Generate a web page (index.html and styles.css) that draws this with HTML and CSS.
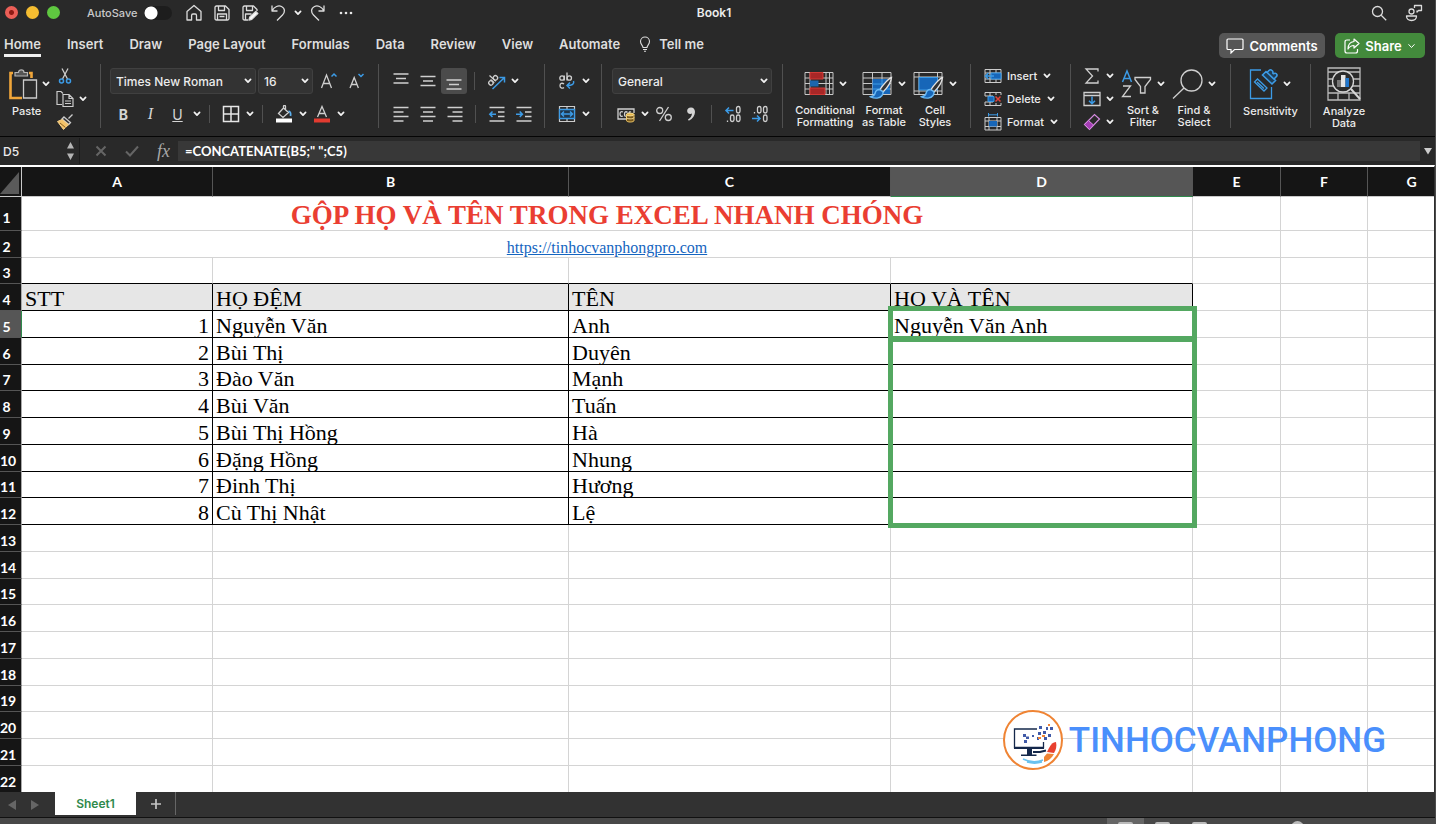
FILE: index.html
```html
<!DOCTYPE html>
<html lang="vi">
<head>
<meta charset="utf-8">
<title>Book1</title>
<link rel="stylesheet" href="styles.css">
</head>
<body>
<svg class="defs" aria-hidden="true">
  <symbol id="chev" viewBox="0 0 8 8"><path d="M1.4 2.4 4 5.2 6.6 2.4" fill="none" stroke="currentColor" stroke-width="1.7" stroke-linecap="round" stroke-linejoin="round"/></symbol>
  <symbol id="brush" viewBox="0 0 24 24"><path d="M22.5 1.5c-3 1-9 8-11.500 12l3 2.500c3-3 8-9.500 8.500-14.500z" fill="#333" stroke="#e2e2e2" stroke-width="1.400"/><path d="M10.500 13.500c-2.500 0-4 1.500-4.500 4-.4 1.800-2 2.800-4.500 3.300 4.500 2.200 9.500 1.700 11.500-1.300.9-1.400 1.200-2.500.8-3.800z" fill="#1766b8" stroke="#69b9f5" stroke-width="1.400"/></symbol>
</svg>
<div class="app">
  <header class="titlebar">
    <div class="title-left">
      <div class="lights"><span class="light red"></span><span class="light yellow"></span><span class="light green"></span></div>
      <label class="autosave">AutoSave <input type="checkbox" class="toggle"></label>
      <div class="quick">
        <button aria-label="Home"><svg width="18" height="18" viewBox="0 0 18 18"><path d="M2 7.500 9 1.500l7 6V16h-4.500v-4.500c0-1-.6-1.500-1.300-1.500H8c-.8 0-1.400.5-1.400 1.500V16H2z"/></svg></button>
        <button aria-label="Save"><svg width="18" height="18" viewBox="0 0 18 18"><path d="M2 3.500C2 2.500 2.500 2 3.500 2h9L16 5.500v9c0 1-.5 1.500-1.500 1.500h-11C2.500 16 2 15.500 2 14.500zM5.500 2v4.500h6V2M4.500 16v-6h9v6M6.500 12.500h5"/></svg></button>
        <button aria-label="Save as"><svg width="18" height="18" viewBox="0 0 18 18"><path d="M7 16H3.500C2.500 16 2 15.500 2 14.500v-11C2 2.500 2.500 2 3.500 2h9L16 5.500V7M5.500 2v4.500h6V2M4.500 16v-6h6"/><path d="m8 16 .8-3 6-5.500 2 2-6 5.800z" fill="#fff"/></svg></button>
        <button aria-label="Undo"><svg width="18" height="18" viewBox="0 0 18 18"><path d="M3 1.500v5.500h5.500M3 7C5.500 2.500 9.500 1 12.500 2.500c4 2 3.500 6 1 8.500L8 16.500"/></svg></button>
        <button class="mini" aria-label="Undo list"><svg class="chev"><use href="#chev"/></svg></button>
        <button aria-label="Redo"><svg width="18" height="18" viewBox="0 0 18 18"><path d="M15 1.500v5.500H9.500M15 7C12.500 2.500 8.500 1 5.500 2.500c-4 2-3.500 6-1 8.500l5.500 5.500"/></svg></button>
        <button aria-label="More"><svg width="18" height="18" viewBox="0 0 18 18"><g fill="#e8e8e8" stroke="none"><circle cx="4" cy="9" r="1.300"/><circle cx="9" cy="9" r="1.300"/><circle cx="14" cy="9" r="1.300"/></g></svg></button>
      </div>
    </div>
    <h1 class="doc-title">Book1</h1>
    <div class="title-right quick">
      <button aria-label="Search"><svg width="18" height="18" viewBox="0 0 18 18"><circle cx="7.500" cy="7.500" r="5"/><path d="m11.200 11.200 5 5"/></svg></button>
      <button aria-label="Presence"><svg width="18" height="18" viewBox="0 0 18 18"><circle cx="6.500" cy="7.500" r="2.500"/><path d="M1.500 12h10c0 3-2 4.500-5 4.500s-5-1.500-5-4.500zM9.500 4V1.500h7v5h-3l-1.500 1.500V6.500"/></svg></button>
    </div>
  </header>

  <nav class="tabs">
    <a href="#" class="tab active">Home</a>
    <a href="#" class="tab">Insert</a>
    <a href="#" class="tab">Draw</a>
    <a href="#" class="tab">Page Layout</a>
    <a href="#" class="tab">Formulas</a>
    <a href="#" class="tab">Data</a>
    <a href="#" class="tab">Review</a>
    <a href="#" class="tab">View</a>
    <a href="#" class="tab">Automate</a>
    <a href="#" class="tab tell"><svg width="12" height="16" viewBox="0 0 12 16"><path d="M4 11.500C4 9.500 1.500 8.500 1.500 5.500a4.500 4.500 0 0 1 9 0c0 3-2.500 4-2.500 6zM4 13.500h4M5 15.300h2" fill="none" stroke="#ddd" stroke-width="1.100"/></svg>Tell me</a>
    <div class="tab-actions">
      <button class="pill comments"><svg width="18" height="16" viewBox="0 0 18 16"><path d="M2 1h14c.6 0 1 .4 1 1v8.500c0 .6-.4 1-1 1H8.500L5 15v-3.500H2c-.6 0-1-.4-1-1V2c0-.6.4-1 1-1z" fill="none" stroke="#fff" stroke-width="1.200"/></svg>Comments</button>
      <button class="pill share"><svg width="16" height="16" viewBox="0 0 16 16"><path d="M6 2H3C1.700 2 1 2.700 1 4v9c0 1.300.7 2 2 2h8.500c1.300 0 2-.7 2-2v-2M10 1l5 4.500-5 4.500V7.500C7 7.500 5.500 8.500 4 11c0-4 2-7 6-7.500z" fill="none" stroke="#fff" stroke-width="1.200" stroke-linejoin="round"/></svg>Share<svg width="9" height="8" viewBox="0 0 8 8"><path d="M1 2.300 4 5.500 7 2.300" fill="none" stroke="#fff"/></svg></button>
    </div>
  </nav>

  <section class="ribbon">
    <div class="group g-clip">
      <button class="big">
        <span class="big-icon"><svg width="30" height="32" viewBox="0 0 30 32"><path d="M4 5H1.500v25H13M20 5h2.500v5" fill="none" stroke="#f0a63a" stroke-width="2.600"/><path d="M6 8V4.500h3.500C9.500 1 15 1 15 4.500h3.500V8z" fill="#555" stroke="#b5b5b5" stroke-width="1.200"/><path d="M14.500 12h13v18h-13z" fill="#2b2b2b" stroke="#ccc" stroke-width="1.300"/></svg><svg class="chev"><use href="#chev"/></svg></span>
        <span class="left-label">Paste</span>
      </button>
      <div class="stack">
        <button aria-label="Cut"><svg width="18" height="18" viewBox="0 0 18 18"><path d="M6 1.500 11.500 12M12 1.500 6.500 12" fill="none" stroke="#ccc" stroke-width="1.300"/><circle cx="5.500" cy="14" r="2" fill="none" stroke="#3c9be6" stroke-width="1.500"/><circle cx="12.500" cy="14" r="2" fill="none" stroke="#3c9be6" stroke-width="1.500"/></svg></button>
        <button aria-label="Copy"><svg width="18" height="18" viewBox="0 0 18 18"><path d="M6 14.500H1v-13h4l2 2M7 4.500h6l4 4v8H7zM13 4.500v4h4M9 11h6M9 13.500h6" fill="none" stroke="#ccc" stroke-width="1.200"/></svg><svg class="chev"><use href="#chev"/></svg></button>
        <button aria-label="Format painter"><svg width="18" height="18" viewBox="0 0 18 18"><path d="m16.500 1.500-4 4M8 4l6.500 5.500-1.800 2L6 6z" fill="#333" stroke="#ccc" stroke-width="1.300"/><path d="M6 6.500 1.500 8.500l6 8 5-4.800z" fill="#f3c36a" stroke="#f5d08a"/><path d="m4 10 5.500 4.500" stroke="#8a6020"/></svg></button>
      </div>
    </div>

    <div class="group g-font rows">
      <div class="row">
        <label class="combo font-name"><select aria-label="Font"><option>Times New Roman</option></select><svg class="chev"><use href="#chev"/></svg></label>
        <label class="combo font-size"><select aria-label="Font size"><option>16</option></select><svg class="chev"><use href="#chev"/></svg></label>
        <button class="ic" aria-label="Grow font"><svg width="18" height="18" viewBox="0 0 18 18"><path d="M1.500 16 6.500 3l5 13M3.300 11.500h6.500" class="ln"/><path d="m11.500 4.500 2.500-2.500 2.500 2.500" class="bl"/></svg></button>
        <button class="ic" aria-label="Shrink font"><svg width="18" height="18" viewBox="0 0 18 18"><path d="M3 16 7.200 5.500 11.400 16M4.500 12.500h5.500" class="ln"/><path d="m11.500 2 2.500 2.500L16.500 2" class="bl"/></svg></button>
      </div>
      <div class="row">
        <button class="ic letter bold">B</button><button class="ic letter italic">I</button><button class="ic letter under">U</button>
        <button class="drop" aria-label="Underline styles"><svg class="chev"><use href="#chev"/></svg></button>
        <i class="sep"></i>
        <button class="ic" aria-label="Borders"><svg width="18" height="18" viewBox="0 0 18 18"><path d="M1.500 1.500h15v15h-15zM9 1.500v15M1.500 9h15" fill="none" stroke="#e6e6e6" stroke-width="1.500"/></svg></button><button class="drop" aria-label="Border styles"><svg class="chev"><use href="#chev"/></svg></button>
        <i class="sep"></i>
        <button class="ic" aria-label="Fill colour"><svg width="18" height="18" viewBox="0 0 18 18"><path d="m3.500 8.500 5-5.500 5 4.500-5.500 5zM8.500 3V1.200c0-1 2-1 2 0v3" class="ln"/><path d="M13.500 6c2 .5 2.500 2 2 5" fill="none" stroke="#5cb0ef" stroke-width="1.800"/><path d="M1 13.500h16v4H1z" fill="#fff"/></svg></button><button class="drop" aria-label="Fill colours"><svg class="chev"><use href="#chev"/></svg></button>
        <button class="ic" aria-label="Font colour"><svg width="18" height="18" viewBox="0 0 18 18"><path d="M4.500 12 9 1.500 13.500 12M6 8.500h6" class="ln"/><path d="M1 13.500h16v4H1z" fill="#e23b30"/></svg></button><button class="drop" aria-label="Font colours"><svg class="chev"><use href="#chev"/></svg></button>
      </div>
    </div>

    <div class="group g-align rows">
      <div class="row">
        <button class="ic" aria-label="Top align"><svg width="18" height="18" viewBox="0 0 18 18"><path d="M1.500 2h15M4 6.500h10M1.500 11h15" class="ln"/></svg></button>
        <button class="ic" aria-label="Middle align"><svg width="18" height="18" viewBox="0 0 18 18"><path d="M1.500 4.500h15M4 9h10M1.500 13.500h15" class="ln"/></svg></button>
        <button class="ic on" aria-label="Bottom align"><svg width="18" height="18" viewBox="0 0 18 18"><path d="M1.500 8h15M4 12.500h10M1.500 17h15" class="ln"/></svg></button>
        <i class="sep"></i>
        <button class="ic" aria-label="Orientation"><svg width="20" height="18" viewBox="0 0 20 18"><g transform="translate(5.500 8) rotate(-48)" class="ln"><circle cx="-2.500" cy="1.500" r="2.200"/><path d="M-.3-1v5M2-4.500v8.500"/><circle cx="4.200" cy="1.500" r="2.200"/></g><path d="M6.500 17 18 6M13.500 5.500h5v5" class="bl"/></svg></button><button class="drop" aria-label="Orientation list"><svg class="chev"><use href="#chev"/></svg></button>
      </div>
      <div class="row">
        <button class="ic" aria-label="Left align"><svg width="18" height="18" viewBox="0 0 18 18"><path d="M1.500 2.500h15M1.500 7h10M1.500 11.500h15M1.500 16h10" class="ln"/></svg></button>
        <button class="ic" aria-label="Centre"><svg width="18" height="18" viewBox="0 0 18 18"><path d="M1.500 2.500h15M4 7h10M1.500 11.500h15M4 16h10" class="ln"/></svg></button>
        <button class="ic" aria-label="Right align"><svg width="18" height="18" viewBox="0 0 18 18"><path d="M1.500 2.500h15M6.500 7h10M1.500 11.500h15M6.500 16h10" class="ln"/></svg></button>
        <i class="sep"></i>
        <button class="ic" aria-label="Decrease indent"><svg width="18" height="18" viewBox="0 0 18 18"><path d="M1.500 2.500h15M10 7h6.500M10 11.500h6.500M1.500 16h15" class="ln"/><path d="M8 9.200H2M4.500 6.500 1.800 9.200l2.700 2.700" class="bl"/></svg></button>
        <button class="ic" aria-label="Increase indent"><svg width="18" height="18" viewBox="0 0 18 18"><path d="M1.500 2.500h15M10 7h6.500M10 11.500h6.500M1.500 16h15" class="ln"/><path d="M1 9.200h6M4.700 6.500l2.700 2.700-2.700 2.700" class="bl"/></svg></button>
      </div>
    </div>

    <div class="group g-wrap rows">
      <div class="row">
        <button class="ic" aria-label="Wrap text"><svg width="18" height="18" viewBox="0 0 18 18"><g class="ln"><circle cx="4" cy="6" r="2.200"/><path d="M6.300 3.500v5M9 .5v8"/><circle cx="11.300" cy="6" r="2.200"/><path d="M6 12c-2-1.500-4-.5-4 1.700s2 3.200 4 1.700"/></g><path d="M15.500 9c1 3-1 4.500-6.500 4.500M12 10.500l-3 3 3 3" class="bl"/></svg></button><button class="drop" aria-label="Wrap list"><svg class="chev"><use href="#chev"/></svg></button>
      </div>
      <div class="row">
        <button class="ic" aria-label="Merge"><svg width="18" height="18" viewBox="0 0 18 18"><path d="M1.500 1.500h15v15h-15zM9 1.500v15" fill="none" stroke="#ccc" stroke-width="1.200"/><path d="M1.500 4.500h15v9h-15z" fill="#20364a" stroke="#3c9be6" stroke-width="1.300"/><path d="M4 9h10M6 6.500 3.500 9 6 11.500M12 6.500 14.500 9 12 11.500" class="bl"/></svg></button><button class="drop" aria-label="Merge list"><svg class="chev"><use href="#chev"/></svg></button>
      </div>
    </div>

    <div class="group g-num rows">
      <div class="row"><label class="combo num-format"><select aria-label="Number format"><option>General</option></select><svg class="chev"><use href="#chev"/></svg></label></div>
      <div class="row">
        <button class="ic" aria-label="Currency"><svg width="18" height="18" viewBox="0 0 18 18"><path d="M9 14H1V4h16v4" class="ln"/><path d="M6 7c-2-1-3 .5-3 2s1 3 3 2M10.500 7.500C9 6 7.500 7 7.500 9s.5 2.500 1.500 2M12 8c0-1 1-1.500 2-1" class="ln"/><path d="M9.500 9.500v6c0 2 7.500 2 7.500 0v-6z" fill="#7a5a1c" stroke="#f0ca6c"/><ellipse cx="13.200" cy="9.500" rx="3.800" ry="1.400" fill="#e8b94a" stroke="#f7dd98"/><path d="M9.500 12.500c0 1.800 7.500 1.800 7.500 0" fill="none" stroke="#f7dd98"/></svg></button><button class="drop" aria-label="Currency list"><svg class="chev"><use href="#chev"/></svg></button>
        <button class="ic" aria-label="Percent"><svg width="18" height="18" viewBox="0 0 18 18"><circle cx="4.700" cy="5.500" r="3" class="ln"/><circle cx="13.300" cy="12.500" r="3" class="ln"/><path d="M13.500 2 4.500 16" class="ln"/></svg></button>
        <button class="ic" aria-label="Comma"><svg width="18" height="18" viewBox="0 0 18 18"><path d="M9 2.500c-5 0-5 6.500-.5 6.500.6 0 1-.1 1.500-.4-.2 2.700-1.500 4.400-4 6l.8 1.200C11 13.500 13 10 13 7c0-2.700-1.500-4.500-4-4.500z" fill="#d4d4d4"/></svg></button>
        <i class="sep"></i>
        <button class="ic" aria-label="More decimals"><svg width="18" height="18" viewBox="0 0 18 18"><path d="M9.500 5.500H2M5 2.500l-3 3 3 3" class="bl"/><g class="ln"><rect x="12.500" y="1.500" width="3.500" height="6.500" rx="1.700"/><rect x="6.500" y="10" width="3.500" height="6.500" rx="1.700"/><rect x="12.500" y="10" width="3.500" height="6.500" rx="1.700"/><path d="M3.500 15.500v1.500"/></g></svg></button>
        <button class="ic" aria-label="Fewer decimals"><svg width="18" height="18" viewBox="0 0 18 18"><path d="M1 13.500h8M6 10.500l3 3-3 3" class="bl"/><g class="ln"><rect x="6.500" y="1.500" width="3.500" height="6.500" rx="1.700"/><rect x="12.500" y="1.500" width="3.500" height="6.500" rx="1.700"/><rect x="12.500" y="10" width="3.500" height="6.500" rx="1.700"/><path d="M3.500 7v1.500"/></g></svg></button>
      </div>
    </div>

    <div class="group g-styles">
      <button class="big w-cf"><span class="big-icon"><svg width="30" height="32" viewBox="0 0 30 32"><path d="M1 4.500h28v22H1zM1 10h28M1 15.500h28M1 21h28M6 4.500v22M22 4.500v22M25.500 4.500v22" fill="none" stroke="#c8c8c8"/><path d="M6 4.500h13V11H6zM6 20h15v6.500H6z" fill="#a82727" stroke="#d23a36"/><path d="M6 12.500h8.500v6H6z" fill="#1d66ad"/></svg><svg class="chev"><use href="#chev"/></svg></span><span>Conditional<br>Formatting</span></button>
      <button class="big w-ft"><span class="big-icon"><svg width="31" height="32" viewBox="0 0 31 32"><path d="M1 4.500h28v22H1zM1 10h28M1 15.500h28M1 21h28M10.500 4.500v22M20 4.500v22" fill="none" stroke="#c8c8c8"/><path d="M10.500 11H28v15H10.500z" fill="#1766b8"/><path d="M10.500 16H28M10.500 21H28M20 11v15" stroke="#3c9be6"/><use href="#brush" x="7" y="8" width="24" height="24"/></svg><svg class="chev"><use href="#chev"/></svg></span><span>Format<br>as Table</span></button>
      <button class="big w-cs"><span class="big-icon"><svg width="31" height="32" viewBox="0 0 31 32"><path d="M1 4.500h28v22H1zM1 9h28M6 4.500v22M24.500 4.500v22M1 23h28" fill="none" stroke="#c8c8c8"/><path d="M6 9.500h18.500V22H6z" fill="#1766b8" stroke="#3c9be6"/><use href="#brush" x="7" y="8" width="24" height="24"/></svg><svg class="chev"><use href="#chev"/></svg></span><span>Cell<br>Styles</span></button>
    </div>

    <div class="group g-cells stack">
      <button><svg width="18" height="16" viewBox="0 0 18 16"><path d="M1 1.500h16v13H1zM1 5h16M1 11h16M6 1.500v13M12 1.500v13" fill="none" stroke="#ccc"/><path d="M7 5h10v6H7z" fill="#1766b8" stroke="#3c9be6"/><path d="M10 8H1M4.500 5 1.500 8l3 3" class="bl"/></svg>Insert<svg class="chev"><use href="#chev"/></svg></button>
      <button><svg width="18" height="16" viewBox="0 0 18 16"><path d="M17 4V1.500H1V5h8M1 14.500h16V12M1 14.500V11h8M6 1.500V5M12 1.500V4M6 11v3.500M12 12v2.500" fill="none" stroke="#ccc"/><path d="M4 5.500h6v5H4z" fill="#1766b8" stroke="#3c9be6"/><path d="m11.500 5.500 5 5m0-5-5 5" stroke="#e0443c" stroke-width="1.500"/></svg>Delete<svg class="chev"><use href="#chev"/></svg></button>
      <button><svg width="18" height="18" viewBox="0 0 18 18"><path d="M1 4.500h16V17H1zM1 8h16M1 13.500h16M5 4.500V17M13 4.500V17" fill="none" stroke="#ccc"/><path d="M5 8h8v5.500H5z" fill="#1766b8"/><path d="M4.500 1.800h9M4.500 0v3.500M13.500 0v3.500" stroke="#3c9be6"/></svg>Format<svg class="chev"><use href="#chev"/></svg></button>
    </div>

    <div class="group g-edit">
      <div class="stack">
        <button aria-label="Sum"><svg width="18" height="18" viewBox="0 0 18 18"><path d="M15 4.500V2H3l6.500 7L3 16h12v-2.500" class="ln"/></svg><svg class="chev"><use href="#chev"/></svg></button>
        <button aria-label="Fill"><svg width="18" height="18" viewBox="0 0 18 18"><path d="M1 2.500h16v13H1zM1 5.500h16" class="ln"/><path d="M9 6.500v7M6 10.800l3 3 3-3" class="bl"/></svg><svg class="chev"><use href="#chev"/></svg></button>
        <button aria-label="Clear"><svg width="18" height="18" viewBox="0 0 18 18"><path d="m1.500 11.500 10-10 5 4.500-10 10.500z" fill="none" stroke="#d58be0" stroke-width="1.200"/><path d="m1.500 11.500 4-4 5 4.500-4 4.500z" fill="#a53db5" stroke="#d58be0"/></svg><svg class="chev"><use href="#chev"/></svg></button>
      </div>
      <button class="big w-sort"><span class="big-icon"><svg width="31" height="32" viewBox="0 0 31 32"><path d="M1.500 14 6 3l4.500 11M3 10.500h6" class="bl"/><path d="M2 18h7.500L1.500 28.500h8.500" class="ln"/><path d="M14 9.500h15.500v2L24 18.500V25h-4.500v-6.500L14 11.500z" class="ln"/></svg><svg class="chev"><use href="#chev"/></svg></span><span>Sort &amp;<br>Filter</span></button>
      <button class="big w-find"><span class="big-icon"><svg width="31" height="32" viewBox="0 0 31 32"><circle cx="19.500" cy="12.500" r="10.500" class="ln"/><path d="M12 20 1 30.500" class="ln"/></svg><svg class="chev"><use href="#chev"/></svg></span><span>Find &amp;<br>Select</span></button>
    </div>

    <div class="group g-sens">
      <button class="big"><span class="big-icon"><svg width="29" height="32" viewBox="0 0 29 32"><path d="M12 2H1.500v28.500h21V19" fill="none" stroke="#3c9be6" stroke-width="1.300"/><path d="m5.500 14 3-3 9.500 9-3 3zM8 14l7 6.500" fill="none" stroke="#3c9be6" stroke-width="1.300"/><path d="m13.500 7 3.500-3.500 9.500 9-3.500 3.500zM18 4.500l2-2c1-1 2-1 3 0l.5.500c1 1 0 2 .5 2.500s2-1 3 0l.5.500c1 1 .5 2-.5 3l-1.500 1.500" fill="#1f3d55" stroke="#3c9be6" stroke-width="1.600"/></svg><svg class="chev"><use href="#chev"/></svg></span><span>Sensitivity</span></button>
    </div>

    <div class="group g-analyze">
      <button class="big"><span class="big-icon"><svg width="34" height="34" viewBox="0 0 34 34"><path d="M1 1h32v32H1zM1 5h32M1 12h32M1 19h32M1 26h32M11 26v7M22 26v7" fill="none" stroke="#bbb" stroke-width="1.300"/><circle cx="16" cy="14.500" r="10.500" fill="#2b2b2b" stroke="#d6d6d6" stroke-width="1.300"/><path d="m24 22 9 10" stroke="#d6d6d6" stroke-width="2"/><path d="M10 13h4v7h-4z" fill="#777"/><path d="M14 8h4.500v12H14z" fill="#e5e5e5"/><path d="M18.500 11h3.500v9h-3.500z" fill="#1f77cf"/></svg></span><span>Analyze<br>Data</span></button>
    </div>
  </section>

  <div class="formula-bar">
    <input class="name-box" aria-label="Name box" value="D5">
    <svg class="stepper" width="9" height="20" viewBox="0 0 9 20"><path d="M4.500 1 8 7.500H1zM4.500 19 8 12.500H1z" fill="#b5b5b5"/></svg>
    <div class="fx-tools">
      <button aria-label="Cancel"><svg width="12" height="12" viewBox="0 0 12 12"><path d="m1.500 1.500 9 9m0-9-9 9" stroke="#656565" stroke-width="2"/></svg></button>
      <button aria-label="Enter"><svg width="14" height="12" viewBox="0 0 14 12"><path d="m1 6.500 4 4L13 1.500" fill="none" stroke="#656565" stroke-width="2"/></svg></button>
      <button class="fx">fx</button>
    </div>
    <input class="formula" aria-label="Formula" value='=CONCATENATE(B5;" ";C5)'>
    <button class="expand" aria-label="Expand"><svg width="8" height="8" viewBox="0 0 8 8"><path d="M0 1h8L4 7.500z" fill="#ccc"/></svg></button>
  </div>

  <main class="sheet">
    <table class="grid">
      <colgroup><col class="c-h"><col class="c-a"><col class="c-b"><col class="c-c"><col class="c-d"><col class="c-e"><col class="c-f"><col class="c-g"></colgroup>
      <thead><tr><th class="corner"><svg width="20" height="22" viewBox="0 0 20 22"><path d="M19 0v22H0z" fill="#5a5a5a"/></svg></th><th>A</th><th>B</th><th>C</th><th class="sel">D</th><th>E</th><th>F</th><th>G</th></tr></thead>
      <tbody>
        <tr class="tall"><th>1</th><td colspan="4" class="heading">GỘP HỌ VÀ TÊN TRONG EXCEL NHANH CHÓNG</td><td></td><td></td><td></td></tr>
        <tr><th>2</th><td colspan="4" class="link"><a href="#">https://tinhocvanphongpro.com</a></td><td></td><td></td><td></td></tr>
        <tr class="pre"><th>3</th><td></td><td></td><td></td><td></td><td></td><td></td><td></td></tr>
        <tr class="data names"><th>4</th><td>STT</td><td>HỌ ĐỆM</td><td>TÊN</td><td>HỌ VÀ TÊN</td><td></td><td></td><td></td></tr>
        <tr class="data"><th class="sel">5</th><td>1</td><td>Nguyễn Văn</td><td>Anh</td><td class="anchor">Nguyễn Văn Anh<span class="box active-cell"></span></td><td></td><td></td><td></td></tr>
        <tr class="data"><th>6</th><td>2</td><td>Bùi Thị</td><td>Duyên</td><td class="anchor"><span class="box fill-range"></span></td><td></td><td></td><td></td></tr>
        <tr class="data"><th>7</th><td>3</td><td>Đào Văn</td><td>Mạnh</td><td></td><td></td><td></td><td></td></tr>
        <tr class="data"><th>8</th><td>4</td><td>Bùi Văn</td><td>Tuấn</td><td></td><td></td><td></td><td></td></tr>
        <tr class="data"><th>9</th><td>5</td><td>Bùi Thị Hồng</td><td>Hà</td><td></td><td></td><td></td><td></td></tr>
        <tr class="data"><th>10</th><td>6</td><td>Đặng Hồng</td><td>Nhung</td><td></td><td></td><td></td><td></td></tr>
        <tr class="data"><th>11</th><td>7</td><td>Đinh Thị</td><td>Hương</td><td></td><td></td><td></td><td></td></tr>
        <tr class="data"><th>12</th><td>8</td><td>Cù Thị Nhật</td><td>Lệ</td><td></td><td></td><td></td><td></td></tr>
        <tr><th>13</th><td></td><td></td><td></td><td></td><td></td><td></td><td></td></tr>
        <tr><th>14</th><td></td><td></td><td></td><td></td><td></td><td></td><td></td></tr>
        <tr><th>15</th><td></td><td></td><td></td><td></td><td></td><td></td><td></td></tr>
        <tr><th>16</th><td></td><td></td><td></td><td></td><td></td><td></td><td></td></tr>
        <tr><th>17</th><td></td><td></td><td></td><td></td><td></td><td></td><td></td></tr>
        <tr><th>18</th><td></td><td></td><td></td><td></td><td></td><td></td><td></td></tr>
        <tr><th>19</th><td></td><td></td><td></td><td></td><td></td><td></td><td></td></tr>
        <tr><th>20</th><td></td><td></td><td></td><td></td><td></td><td></td><td></td></tr>
        <tr><th>21</th><td></td><td></td><td></td><td></td><td></td><td></td><td></td></tr>
        <tr><th>22</th><td></td><td></td><td></td><td></td><td></td><td></td><td></td></tr>
      </tbody>
    </table>
    <div class="watermark">
      <svg width="60" height="60" viewBox="0 0 60 60">
        <circle cx="30" cy="30" r="29" fill="#fff" stroke="#ef8434" stroke-width="2"/>
        <path d="M34 19H11.500v18.500h29V32" fill="none" stroke="#14284b" stroke-width="1.300"/><path d="M11 37h30v2H11zM24 39h5v5.500h4.500V46H18v-1.500h6z" fill="#14284b"/>
        <path d="M30 42h7l6-1.500" fill="none" stroke="#14284b" stroke-width="2"/>
        <path d="M20 24h3v3h-3zM23 26.500h3v2.500h-3zM21 30h3v3h-3zM29 25h2v2h-2zM35 22h3v3h-3zM36 16h3v3h-3zM40 21h3v3h-3zM41 27h3v3h-3zM43 17h2v3h-2zM45 24h3v3h-3zM47 17h3v3h-3zM34 27h2v3h-2z" fill="#405aa8"/>
        <path d="M39 25h3v2h-3zM45 14h2v2h-2zM35 27h3v2h-3z" fill="#ef8434"/>
        <path d="M46 38c2-4 4-6 7-6 1 4 0 8-2 11l-7-1z" fill="#e8402f"/><path d="M44 43.500 51 44c-2 4-6 7-10 8v-5z" fill="#ef8434"/>
        <path d="M20 49c7 3.500 14 3.500 20 1M24 52c5 1.500 10 1.500 15 0" fill="none" stroke="#69c1ee" stroke-width="1.500"/>
      </svg>
      <span>TINHOCVANPHONG</span>
    </div>
  </main>

  <footer class="sheet-tabs">
    <button class="arrow" aria-label="Previous sheet"><svg width="8" height="12" viewBox="0 0 8 12"><path d="M8 1v10L0 6z" fill="#666"/></svg></button>
    <button class="arrow" aria-label="Next sheet"><svg width="8" height="12" viewBox="0 0 8 12"><path d="M0 1v10l8-5z" fill="#666"/></svg></button>
    <button class="sheet-tab">Sheet1</button>
    <button class="add" aria-label="Add sheet"><svg width="12" height="12" viewBox="0 0 12 12"><path d="M6 1v10M1 6h10" stroke="#c4c4c4" stroke-width="1.700"/></svg></button>
  </footer>
  <div class="status"><span class="view on"><i></i></span><span class="view"><i></i></span><span class="view"><i></i></span><span class="knob"></span></div>
</div>
</body>
</html>
```
FILE: styles.css
```css
* { box-sizing: border-box; }
body { margin: 0; background: #292929; color: #ececec; font-family: Inter, "Liberation Sans", sans-serif; font-size: 11px; }
button, input, select { font: inherit; color: inherit; background: none; border: 0; margin: 0; padding: 0; }
button { display: flex; align-items: center; justify-content: center; white-space: nowrap; }
svg { display: block; flex: none; }
.defs { width: 0; height: 0; position: absolute; }
.chev { width: 8px; height: 8px; color: #f2f2f2; }
.ln { fill: none; stroke: #cfcfcf; stroke-width: 1.3; }
.bl { fill: none; stroke: #3c9be6; stroke-width: 1.5; }
.app { display: flex; flex-direction: column; height: 100vh; overflow: hidden; border-right: 1px solid #4c4c4c; }

.titlebar { display: grid; grid-template-columns: 1fr auto 1fr; align-items: center; height: 25px; padding-right: 7px; }
.title-left { display: flex; align-items: center; }
.lights { display: flex; gap: 8px; padding-left: 5px; }
.light { width: 13px; height: 13px; border-radius: 50%; }
.red { background: radial-gradient(circle, #8e1a14 0 2px, #ec5f57 3px); }
.yellow { background: #f5bd31; }
.green { background: #5fc840; }
.autosave { display: flex; align-items: center; gap: 7px; margin-left: 27px; color: #c9c9c9; font-weight: 500; }
.toggle { appearance: none; width: 28px; height: 14px; border-radius: 7px; background: radial-gradient(circle at 7px 7px, #fff 0 6px, transparent 7px) #1d1d1d; }
.quick { display: flex; align-items: center; }
.quick button { width: 28px; height: 22px; }
.quick .mini { width: 12px; }
.title-left .quick { margin-left: 8px; }
.quick svg:not(.chev) { fill: none; stroke: #dcdcdc; stroke-width: 1.3; stroke-linejoin: round; }
.doc-title { margin: 0; font-size: 12px; font-weight: 600; }
.title-right { justify-content: flex-end; gap: 7px; }

.tabs { display: flex; align-items: center; gap: 26px; height: 37px; padding-left: 4px; }
.tab { display: flex; align-items: center; height: 26px; color: #dedede; font-size: 13px; font-weight: 600; text-decoration: none; white-space: nowrap; border-bottom: 3px solid transparent; border-top: 3px solid transparent; }
.tab.active { border-bottom-color: #f0f0f0; }
.tab.tell { gap: 8px; margin-left: -7px; }
.tab-actions { display: flex; gap: 10px; margin: 4px 10px 0 auto; }
.pill { height: 25px; gap: 5px; padding: 0 8px; border-radius: 5px; font-size: 13px; font-weight: 600; color: #fff; }
.comments { width: 106px; background: #565656; }
.share { width: 90px; background: #438a3c; }

.ribbon { display: flex; height: 75px; padding-top: 2px; border-bottom: 1px solid #050505; overflow: hidden; }
.group { flex: none; display: flex; height: 64px; border-right: 1px solid #505050; }
.group:last-child { border-right: 0; }
.rows { flex-direction: column; gap: 7px; padding-top: 4px; }
.row { display: flex; align-items: center; height: 26px; }
.stack { display: flex; flex-direction: column; align-items: flex-start; }
.stack button { flex: none; height: 23px; gap: 5px; font-weight: 500; }
.ic { width: 27px; height: 26px; }
.ic.on { background: #4b4b4b; border-radius: 3px; width: 26px; }
.drop { width: 11px; height: 26px; }
.sep { width: 1px; height: 18px; background: #505050; margin: 0 7px; }
.combo { display: grid; align-items: center; height: 26px; background: #333; border: 1px solid #404040; border-radius: 3px; }
.combo > * { grid-area: 1 / 1; }
.combo select { appearance: none; width: 100%; padding-left: 5px; font-size: 12px; font-weight: 500; }
.combo .chev { justify-self: end; margin-right: 3px; pointer-events: none; }
.big { flex-direction: column; justify-content: flex-start; font-size: 11px; font-weight: 500; line-height: 12px; padding-top: 3px; }
.big-icon { display: flex; align-items: center; gap: 5px; height: 34px; margin-bottom: 4px; }

.g-clip { width: 101px; padding-left: 9px; gap: 6px; }
.g-clip .big { align-items: flex-start; }
.g-clip .big-icon { gap: 3px; }
.left-label { padding-left: 3px; }
.g-font { width: 278px; padding-left: 9px; }
.font-name { width: 146px; margin-right: 2px; }
.font-size { width: 55px; margin-right: 2px; }
.letter { font-size: 14px; color: #d5d5d5; }
.bold { font-weight: 700; }
.italic { font-family: "Liberation Serif", serif; font-style: italic; font-size: 16px; }
.under { text-decoration: underline; }
.g-align { width: 166px; padding-left: 8px; }
.g-wrap { width: 57px; padding-left: 8px; }
.g-num { width: 181px; padding-left: 10px; }
.num-format { width: 160px; }
.g-styles { width: 188px; padding-left: 11px; }
.w-cf { width: 62px; }
.w-ft { width: 56px; }
.w-cs { width: 46px; }
.g-cells { width: 100px; padding-left: 13px; }
.g-cells .chev { margin-left: 1px; }
.g-edit { width: 160px; padding-left: 12px; gap: 1px; }
.g-edit .stack { margin-right: 3px; }
.w-sort, .w-find { width: 50px; }
.g-sens { width: 80px; justify-content: center; }
.g-analyze { width: 66px; justify-content: center; }

.formula-bar { display: flex; align-items: center; height: 26px; margin-top: 1px; font-weight: 500; }
.name-box { width: 66px; padding-left: 3px; font-size: 12px; }
.fx-tools { display: flex; align-items: center; gap: 18px; height: 26px; margin-left: 4px; padding-left: 15px; border-left: 1px solid #1c1c1c; }
.fx { font-family: "Liberation Serif", serif; font-style: italic; font-size: 18px; color: #a8a8a8; }
.formula { flex: 1; height: 20px; margin-left: 8px; padding-left: 7px; background: #383838; font: bold 13px Lato, sans-serif; color: #fff; }
.expand { width: 15px; }

.sheet { position: relative; flex: 1; min-height: 0; overflow: hidden; background: #fff; border-top: 2px solid #fff; margin-top: 1px; border-right: 1px solid #2f2f2f; }
.grid { table-layout: fixed; width: 1456px; border-collapse: separate; border-spacing: 0; color: #000; font-family: "Liberation Serif", serif; font-size: 22px; }
.c-h { width: 22px; }
.c-a { width: 191px; }
.c-b { width: 356px; }
.c-c { width: 322px; }
.c-d { width: 302px; }
.c-e { width: 88px; }
.c-f { width: 87px; }
.c-g { width: 88px; }
.grid th { padding: 0; background: #151515; color: #fff; font: bold 14px Lato, sans-serif; text-align: center; border-right: 1px solid #555; border-bottom: 1px solid #555; }
.grid thead th { height: 30px; border-bottom-color: #c9c9c9; }
.grid thead .sel { background: #565656; border-bottom-color: #2f8a4c; }
.grid .corner { vertical-align: bottom; padding-bottom: 2px; border-right-color: #c9c9c9; }
.grid tbody th { height: 27px; padding-right: 8px; vertical-align: bottom; line-height: 20px; border-right-color: #aaa; }
.grid tbody .sel { background: #565656; border-right-color: #2f8a4c; }
.grid td { padding: 0 3px; vertical-align: bottom; line-height: 22px; white-space: nowrap; border-right: 1px solid #d4d4d4; border-bottom: 1px solid #d4d4d4; }
.grid tbody tr:nth-child(4n+3) th { height: 26px; }
.grid tbody .tall th { height: 34px; padding-bottom: 2px; }
.grid .heading { text-align: center; font-size: 27px; line-height: 30px; font-weight: bold; color: #ea3e32; }
.grid .link { text-align: center; font-size: 16px; line-height: 18px; }
.link a { color: #1565c0; }
.pre td:nth-child(-n+5) { border-bottom-color: #000; }
.data td:nth-child(-n+5) { border-bottom-color: #000; border-right-color: #000; }
.data td:nth-child(2) { text-align: right; }
.names td:nth-child(-n+5) { background: #e6e6e6; text-align: left; }
.anchor { position: relative; }
.box { position: absolute; left: -3px; right: -5px; border: 5px solid #54a861; }
.active-cell { top: -5px; bottom: -5px; }
.fill-range { top: -2px; height: 192px; }
.watermark { position: absolute; right: 48px; bottom: 22px; display: flex; align-items: center; gap: 6px; color: #4a8ffc; font: 500 35px Roboto, sans-serif; }

.sheet-tabs { display: flex; height: 26px; background: #323232; border-bottom: 1px solid #111; }
.arrow { width: 23px; }
.sheet-tab { width: 81px; height: 23px; margin-left: 9px; background: #fff; color: #2f8a4c; font-size: 12px; font-weight: 600; }
.add { width: 40px; height: 23px; border-right: 1px solid #666; }
.status { display: flex; justify-content: flex-end; height: 6px; padding-right: 131px; background: #484848; overflow: hidden; }
.view { width: 37px; padding: 4px 11px 0; }
.view.on { background: #666; }
.view i { display: block; height: 4px; border-radius: 2px; background: #bbb; }
.knob { width: 13px; height: 13px; margin: 3px 0 0 73px; border-radius: 50%; background: #bbb; }
```
